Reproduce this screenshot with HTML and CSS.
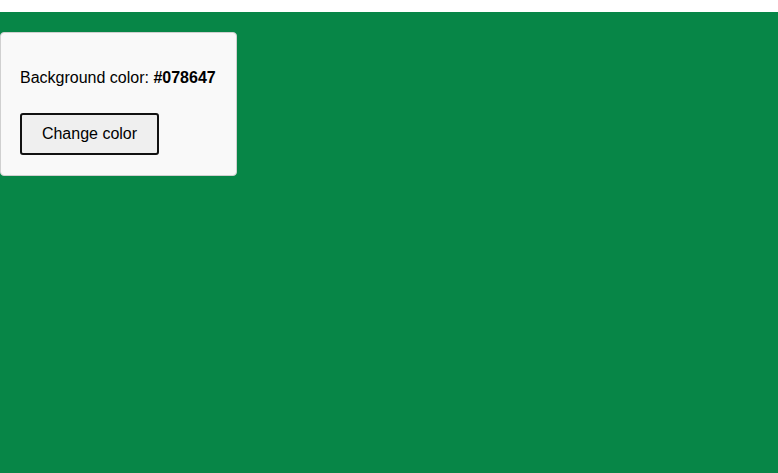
FILE: index.html
```html
<!DOCTYPE html>
<html>
<head>
<meta charset="utf-8">
<link rel="stylesheet" href="styles.css">
</head>
<body>
<div class="page">
  <div class="card">
    <p class="label">Background color: <strong>#078647</strong></p>
    <button class="btn">Change color</button>
  </div>
</div>
</body>
</html>
```
FILE: styles.css
```css
html, body {
  margin: 0;
  padding: 0;
  background: #ffffff;
  font-family: "Liberation Sans", Arial, sans-serif;
}
.page {
  margin-top: 12px;
  height: 461px;
  background: #078647;
  padding-top: 20px;
  box-sizing: border-box;
}
.card {
  width: 237px;
  box-sizing: border-box;
  background: #f9f9f9;
  border: 1px solid #d0d0d0;
  border-radius: 4px;
  padding: 19px 19px 20px 19px;
}
.label {
  margin: 17px 0 26px 0;
  font-size: 16px;
  line-height: 18px;
  color: #000;
}
.btn {
  display: block;
  width: 139px;
  height: 42px;
  font-family: "Liberation Sans", Arial, sans-serif;
  font-size: 16px;
  color: #000;
  background: #efefef;
  border: 2px solid #111;
  border-radius: 3px;
  padding: 0;
}
```
